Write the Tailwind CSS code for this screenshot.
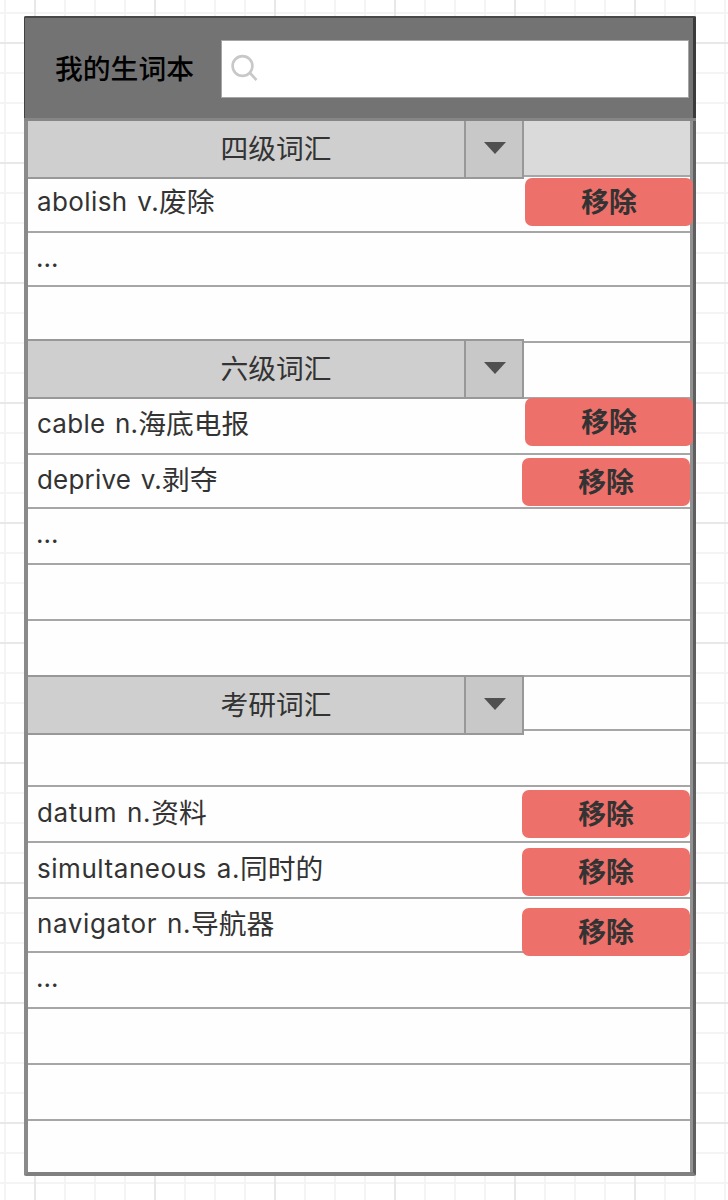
<!DOCTYPE html>
<html lang="zh-CN">
<head>
<meta charset="utf-8">
<title>我的生词本</title>
<script src="https://cdn.jsdelivr.net/npm/@tailwindcss/browser@4"></script>
</head>
<body class="w-[728px] h-[1200px] overflow-hidden bg-white font-['Inter','Noto_Sans_CJK_SC',sans-serif] text-[#333333]">
<!-- canvas grid: 30px cells, every fourth line darker -->
<div class="w-[728px] h-[1200px] pl-6 pt-4 bg-[linear-gradient(to_right,#e8e8e8_2px,transparent_2px),linear-gradient(to_bottom,#e8e8e8_2px,transparent_2px),linear-gradient(to_right,#f4f4f4_2px,transparent_2px),linear-gradient(to_bottom,#f4f4f4_2px,transparent_2px)] bg-size-[120px_120px,120px_120px,30px_30px,30px_30px] bg-position-[34px_0px,0px_42px,4px_0px,0px_12px]">
<div class="w-[672px] h-[1160px] flex flex-col rounded-[2px] overflow-hidden bg-[#fefefe]">
  <header class="h-[102px] shrink-0 flex items-start bg-[#737373] border-t-2 border-l border-t-[#484848] border-l-[#424242] border-r-3 border-r-[#3b3b3b]">
    <h1 class="w-[196px] pl-[30px] mt-[29px] text-[27.8px] leading-10 font-medium text-black font-['Noto_Sans_CJK_SC',sans-serif] whitespace-nowrap">我的生词本</h1>
    <div class="w-[468px] h-[58px] mt-[22px] bg-white border border-[#a6a6a6] flex items-start">
      <svg class="w-8 h-8 ml-2 mt-[11px]" viewBox="0 0 32 32" fill="none" stroke="#c8c8c8" stroke-width="2.6"><circle cx="12.5" cy="14" r="9.9"/><path d="M19.5 20.5L26.5 28"/></svg>
    </div>
  </header>
  <div class="h-[3px] shrink-0 bg-[#868686]"></div>
  <main class="grow border-l-4 border-l-[#8a8a8a] border-r-3 border-r-[#5f5f5f] border-b-4 border-b-[#808080]">
  <div class="h-full border-r-3 border-[#929292]">
    <section>
      <div class="h-[58px] flex items-start">
        <div class="h-[58px] w-[436px] pl-[60px] pb-1 bg-[#cfcfcf] border-b-2 border-[#989898] flex items-center justify-center text-[27.75px] leading-10 font-['Noto_Sans_CJK_SC',sans-serif]">四级词汇</div>
        <div class="h-[58px] w-[60px] pl-[2px] pb-[2px] bg-[#c8c8c8] border-x-2 border-b-2 border-[#989898] flex items-center justify-center"><svg class="w-[22px] h-3" viewBox="0 0 22 12"><path d="M0 0H22L11 12Z" fill="#505050"/></svg></div>
        <div class="h-14 grow bg-[#dadada] border-b-2 border-[#a6a6a6]"></div>
      </div>
      <div class="h-[54px] border-b-2 border-[#a6a6a6] flex items-start justify-between">
        <p class="ml-[9px] mt-[3px] text-[27.75px] leading-10 whitespace-nowrap"><span class="text-[26px] leading-8 align-[1px] tracking-[0.4px] [word-spacing:2px]">abolish v.</span>废除</p>
        <button class="relative w-[168px] h-12 -mt-px -mr-[3px] shrink-0 rounded-[7px] bg-[#ee706a] pb-1 text-[27.75px] leading-[42px] font-bold font-['Noto_Sans_CJK_SC',sans-serif]">移除</button>
      </div>
      <div class="h-[54px] border-b-2 border-[#a6a6a6]"><p class="ml-2 pt-[5px] text-[26px] leading-10">...</p></div>
      <div class="h-[52px]"></div>
    </section>
    <section>
      <div class="h-[60px] flex items-start">
        <div class="h-[60px] w-[436px] pl-[60px] pb-1 bg-[#cfcfcf] border-y-2 border-[#989898] flex items-center justify-center text-[27.75px] leading-10 font-['Noto_Sans_CJK_SC',sans-serif]">六级词汇</div>
        <div class="h-[60px] w-[60px] pl-[2px] pb-[2px] bg-[#c8c8c8] border-2 border-[#989898] flex items-center justify-center"><svg class="w-[22px] h-3" viewBox="0 0 22 12"><path d="M0 0H22L11 12Z" fill="#505050"/></svg></div>
        <div class="h-[58px] mt-[2px] grow border-y-2 border-[#a6a6a6]"></div>
      </div>
      <div class="h-14 border-b-2 border-[#a6a6a6] flex items-start justify-between">
        <p class="ml-[9px] mt-[5px] text-[27.75px] leading-10 whitespace-nowrap"><span class="text-[26px] leading-8 align-[1px] tracking-[0.25px] [word-spacing:2px]">cable n.</span>海底电报</p>
        <button class="relative w-[168px] h-12 -mt-px -mr-[3px] shrink-0 rounded-[7px] bg-[#ee706a] pb-1 text-[27.75px] leading-[42px] font-bold font-['Noto_Sans_CJK_SC',sans-serif]">移除</button>
      </div>
      <div class="h-[54px] border-b-2 border-[#a6a6a6] flex items-start justify-between">
        <p class="ml-[9px] mt-[5px] text-[27.75px] leading-10 whitespace-nowrap"><span class="text-[26px] leading-8 align-[1px] tracking-[0.2px] [word-spacing:2px]">deprive v.</span>剥夺</p>
        <button class="relative w-[168px] h-12 mt-[3px] shrink-0 rounded-[7px] bg-[#ee706a] pb-1 text-[27.75px] leading-[42px] font-bold font-['Noto_Sans_CJK_SC',sans-serif]">移除</button>
      </div>
      <div class="h-14 border-b-2 border-[#a6a6a6]"><p class="ml-2 pt-[5px] text-[26px] leading-10">...</p></div>
      <div class="h-14 border-b-2 border-[#a6a6a6]"></div>
      <div class="h-[54px]"></div>
    </section>
    <section>
      <div class="h-[60px] flex items-start">
        <div class="h-[60px] w-[436px] pl-[60px] pb-1 bg-[#cfcfcf] border-y-2 border-[#989898] flex items-center justify-center text-[27.75px] leading-10 font-['Noto_Sans_CJK_SC',sans-serif]">考研词汇</div>
        <div class="h-[60px] w-[60px] pl-[2px] pb-[2px] bg-[#c8c8c8] border-2 border-[#989898] flex items-center justify-center"><svg class="w-[22px] h-3" viewBox="0 0 22 12"><path d="M0 0H22L11 12Z" fill="#505050"/></svg></div>
        <div class="h-14 grow border-y-2 border-[#a6a6a6]"></div>
      </div>
      <div class="h-[52px] border-b-2 border-[#a6a6a6]"></div>
      <div class="h-14 border-b-2 border-[#a6a6a6] flex items-start justify-between">
        <p class="ml-[9px] mt-[6px] text-[27.75px] leading-10 whitespace-nowrap"><span class="text-[26px] leading-8 align-[1px] tracking-[0.6px] [word-spacing:2px]">datum n.</span>资料</p>
        <button class="relative w-[168px] h-12 mt-[3px] shrink-0 rounded-[7px] bg-[#ee706a] pb-1 text-[27.75px] leading-[42px] font-bold font-['Noto_Sans_CJK_SC',sans-serif]">移除</button>
      </div>
      <div class="h-14 border-b-2 border-[#a6a6a6] flex items-start justify-between">
        <p class="ml-[9px] mt-[6px] text-[27.75px] leading-10 whitespace-nowrap"><span class="text-[26px] leading-8 align-[1px] tracking-[0.55px] [word-spacing:2px]">simultaneous a.</span>同时的</p>
        <button class="relative w-[168px] h-12 mt-[5px] shrink-0 rounded-[7px] bg-[#ee706a] pb-1 text-[27.75px] leading-[42px] font-bold font-['Noto_Sans_CJK_SC',sans-serif]">移除</button>
      </div>
      <div class="h-[54px] border-b-2 border-[#a6a6a6] flex items-start justify-between">
        <p class="ml-[9px] mt-[5px] text-[27.75px] leading-10 whitespace-nowrap"><span class="text-[26px] leading-8 align-[1px] tracking-[0.6px] [word-spacing:2px]">navigator n.</span>导航器</p>
        <button class="relative w-[168px] h-12 mt-[9px] shrink-0 rounded-[7px] bg-[#ee706a] pb-1 text-[27.75px] leading-[42px] font-bold font-['Noto_Sans_CJK_SC',sans-serif]">移除</button>
      </div>
      <div class="h-14 border-b-2 border-[#a6a6a6]"><p class="ml-2 pt-[5px] text-[26px] leading-10">...</p></div>
      <div class="h-14 border-b-2 border-[#a6a6a6]"></div>
      <div class="h-14 border-b-2 border-[#a6a6a6]"></div>
      <div class="h-[51px]"></div>
    </section>
  </div>
  </main>
</div>
</div>
</body>
</html>
